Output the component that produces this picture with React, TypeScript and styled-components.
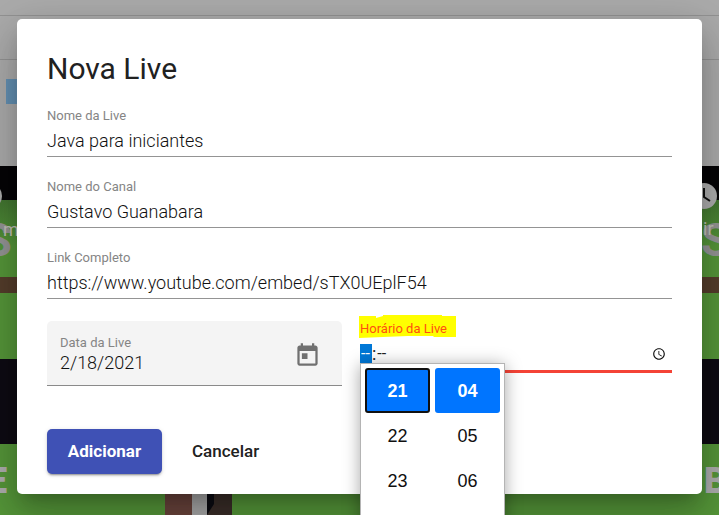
import React from "react";
import styled, { createGlobalStyle } from "styled-components";

const GlobalStyle = createGlobalStyle`
  *, *::before, *::after { box-sizing: border-box; }
  html, body { margin: 0; }
  body {
    font-family: Roboto, "Liberation Sans", sans-serif;
    color: #212121;
    background: #a1a1a1;
  }
  input, button { font: inherit; color: inherit; letter-spacing: inherit; }
`;

const Page = styled.div`
  position: relative;
  height: 100vh;
  overflow: hidden;
`;

const Backdrop = styled.div`
  display: flex;
  flex-direction: column;
  height: 100%;
  background: #ababab;
`;

const Bar = styled.div<{ $height: number }>`
  flex: none;
  height: ${(p) => p.$height}px;
  border-bottom: 1px solid #929292;
`;

const Tools = styled.div`
  flex: none;
  height: 106px;
  padding: 19px 6px;
`;

const Marker = styled.div`
  width: 120px;
  height: 25px;
  background: #6490b3;
`;

const Cards = styled.div`
  flex: 1;
  display: flex;
  gap: 15px;
  background: #a8a8a8;
`;

const Thumbnail = styled.svg<{ $basis?: number }>`
  flex: ${(p) => (p.$basis ? `0 0 ${p.$basis}px` : "1 1 0")};
  min-width: 0;
  height: 100%;
  background: #559639;
  font-family: Roboto, "Liberation Sans", sans-serif;
`;

const Overlay = styled.div`
  position: absolute;
  inset: 0;
  padding: 19px 17px;
`;

const Dialog = styled.form`
  padding: 30px 30px 20px;
  border-radius: 5px;
  background: #fff;
  box-shadow: 0 11px 15px -7px rgba(0, 0, 0, 0.2),
    0 24px 38px 3px rgba(0, 0, 0, 0.14), 0 9px 46px 8px rgba(0, 0, 0, 0.12);
`;

const Title = styled.h1`
  margin: 0 0 19px;
  font-size: 30px;
  line-height: 40px;
  font-weight: 400;
`;

const Field = styled.div`
  display: flex;
  flex-direction: column;
  gap: 5px;
  height: 49px;
  margin-bottom: 22px;
  border-bottom: 1px solid #949494;
`;

const Label = styled.label`
  font-size: 13px;
  line-height: 16px;
  color: #858585;
`;

const TextInput = styled.input`
  width: 100%;
  height: 24px;
  padding: 0;
  border: 0;
  outline: 0;
  background: transparent;
  font-size: 18px;
  font-weight: 350;
  line-height: 24px;
  color: #111;
`;

const Schedule = styled.div`
  display: grid;
  grid-template-columns: minmax(0, 295fr) minmax(0, 312fr);
  gap: 18px;
  align-items: start;
  margin-bottom: 43px;
`;

const DateField = styled.div`
  display: flex;
  align-items: center;
  height: 65px;
  padding: 4px 20px 0 13px;
  border-bottom: 1px solid #8a8a8a;
  border-radius: 5px 5px 0 0;
  background: #f4f4f4;
`;

const DateText = styled.div`
  display: flex;
  flex-direction: column;
  flex: 1;
  min-width: 0;
  height: 50px;
  padding-top: 5px;
`;

const IconButton = styled.button`
  display: grid;
  place-items: center;
  width: 30px;
  height: 30px;
  padding: 0;
  border: 0;
  background: transparent;
  color: #707070;
`;

const TimeField = styled.div`
  position: relative;
  display: flex;
  flex-direction: column;
  gap: 7px;
  height: 52px;
  border-bottom: 3px solid #f44336;
`;

const Highlight = styled.svg`
  position: absolute;
  left: -1px;
  top: -6px;
`;

const TimeLabel = styled(Label)`
  position: relative;
  color: #ff4e10;
`;

const TimeRow = styled.div`
  display: flex;
  align-items: center;
  height: 19px;
  font-size: 18px;
  line-height: 19px;
`;

const Segment = styled.input<{ $selected?: boolean }>`
  width: 12px;
  height: 19px;
  padding: 0 1px;
  border: 0;
  outline: 0;
  font-size: 16px;
  color: ${(p) => (p.$selected ? "#fff" : "#212121")};
  background: ${(p) => (p.$selected ? "#0078d7" : "transparent")};
`;

const ClockButton = styled(IconButton)`
  width: 14px;
  height: 19px;
  margin: 0 6px 0 auto;
  color: #111;
`;

const Picker = styled.div`
  position: absolute;
  top: 42px;
  left: 0;
  display: grid;
  grid-template-columns: 65px 65px;
  gap: 0 5px;
  align-content: start;
  height: 330px;
  padding: 4px;
  border: 1px solid #b4b4b4;
  background: #fff;
  box-shadow: 0 2px 16px rgba(0, 0, 0, 0.35);
  font-family: "Liberation Sans", Arial, sans-serif;
  font-size: 18px;
`;

const Option = styled.button<{ $selected?: boolean; $focused?: boolean }>`
  height: 45px;
  padding: 2px 0 0;
  border: ${(p) => (p.$focused ? "2px solid #101010" : "0")};
  border-radius: 3px;
  background: ${(p) => (p.$selected ? "#0075ff" : "transparent")};
  color: ${(p) => (p.$selected ? "#fff" : "#101010")};
  font-weight: ${(p) => (p.$selected ? 700 : 400)};
`;

const Actions = styled.div`
  display: flex;
  gap: 10px;
`;

const Button = styled.button<{ $primary?: boolean }>`
  min-width: 115px;
  height: 45px;
  padding: 0 20px 1px;
  border: 0;
  border-radius: 5px;
  font-size: 17px;
  text-align: ${(p) => (p.$primary ? "center" : "left")};
  font-weight: ${(p) => (p.$primary ? 700 : 500)};
  color: ${(p) => (p.$primary ? "#fff" : "#212121")};
  background: ${(p) => (p.$primary ? "#3f51b5" : "transparent")};
  box-shadow: ${(p) =>
    p.$primary
      ? "0 3px 1px -2px rgba(0,0,0,.2), 0 2px 2px rgba(0,0,0,.14), 0 1px 5px rgba(0,0,0,.12)"
      : "none"};
`;

const fields = [
  { id: "name", label: "Nome da Live", value: "Java para iniciantes" },
  { id: "channel", label: "Nome do Canal", value: "Gustavo Guanabara" },
  {
    id: "link",
    label: "Link Completo",
    value: "https://www.youtube.com/embed/sTX0UEplF54",
  },
];

const times = [
  ["21", "04"],
  ["22", "05"],
  ["23", "06"],
];

function Stripes() {
  return (
    <>
      <defs>
        <linearGradient id="shade" x1="0" y1="0" x2="0" y2="1">
          <stop offset="0" stopColor="#427530" />
          <stop offset="1" stopColor="#559639" />
        </linearGradient>
      </defs>
      <rect width="100%" height="34" fill="#060507" />
      <rect y="34" width="100%" height="46" fill="url(#shade)" />
      <rect y="111" width="100%" height="16" fill="#543d2b" />
      <rect y="193" width="100%" height="85" fill="#0e0b13" />
    </>
  );
}

export default function App() {
  return (
    <Page>
      <GlobalStyle />
      <Backdrop aria-hidden="true">
        <Bar $height={16} />
        <Bar $height={44} />
        <Tools>
          <Marker />
        </Tools>
        <Cards>
          <Thumbnail $basis={192}>
            <Stripes />
            <rect x="165" y="278" width="27" height="100%" fill="#6a443c" />
            <circle cx="-11" cy="30" r="13" fill="#adadad" />
            <text x="-17" y="90" fontSize="47" fontWeight="700" fill="#949494">S</text>
            <text x="3" y="70" fontSize="18" fill="#c0c0b6">m</text>
            <text x="-13" y="327" fontSize="36" fontWeight="900" fill="#adadad">E</text>
          </Thumbnail>
          <Thumbnail>
            <Stripes />
            <rect y="278" width="25" height="100%" fill="#3a2e29" />
            <path d="M0 278h7v60l-7 11z" fill="#0c0c12" />
            <svg x="100%" overflow="visible">
              <circle cx="-15" cy="30" r="13" fill="#adadad" />
              <path d="M-15 22v9l6 4" fill="none" stroke="#111" strokeWidth="2" />
              <text x="-18" y="90" fontSize="47" fontWeight="700" fill="#949494">S</text>
              <text x="-16" y="69" fontSize="18" fill="#c0c0b6">ir</text>
              <text x="-15" y="327" fontSize="36" fontWeight="900" fill="#adadad">B</text>
            </svg>
          </Thumbnail>
        </Cards>
      </Backdrop>
      <Overlay>
        <Dialog role="dialog" aria-labelledby="title" onSubmit={(e) => e.preventDefault()}>
          <Title id="title">Nova Live</Title>
          {fields.map((f) => (
            <Field key={f.id}>
              <Label htmlFor={f.id}>{f.label}</Label>
              <TextInput id={f.id} defaultValue={f.value} spellCheck={false} />
            </Field>
          ))}
          <Schedule>
            <DateField>
              <DateText>
                <Label htmlFor="date">Data da Live</Label>
                <TextInput id="date" defaultValue="2/18/2021" />
              </DateText>
              <IconButton type="button" aria-label="Abrir calendário">
                <svg width="27" height="27" viewBox="0 0 24 24" fill="currentColor">
                  <path d="M19 3h-1V1h-2v2H8V1H6v2H5c-1.11 0-1.99.9-1.99 2L3 19c0 1.1.89 2 2 2h14c1.1 0 2-.9 2-2V5c0-1.1-.9-2-2-2zm0 16H5V8h14v11zM7 10h5v5H7z" />
                </svg>
              </IconButton>
            </DateField>
            <TimeField>
              <Highlight width="97" height="23" viewBox="359 315 97 23" fill="#ffff00">
                <path d="M359 316h17v2l7-2v-1h59v1h14v21h-22l-1-1h-25l-25 1-24 1z" />
              </Highlight>
              <TimeLabel htmlFor="hour">Horário da Live</TimeLabel>
              <TimeRow>
                <Segment id="hour" $selected defaultValue="--" />
                <span>:</span>
                <Segment aria-label="Minutos" defaultValue="--" />
                <ClockButton type="button" aria-label="Escolher horário">
                  <svg width="14" height="14" viewBox="0 0 24 24" fill="currentColor">
                    <path d="M11.99 2C6.47 2 2 6.48 2 12s4.47 10 9.99 10C17.52 22 22 17.52 22 12S17.52 2 11.99 2zM12 20c-4.42 0-8-3.58-8-8s3.58-8 8-8 8 3.58 8 8-3.58 8-8 8zm.5-13H11v6l5.25 3.15.75-1.23-4.5-2.67z" />
                  </svg>
                </ClockButton>
              </TimeRow>
              <Picker>
                {times.map(([hour, minute], i) => (
                  <React.Fragment key={hour}>
                    <Option type="button" $selected={i === 0} $focused={i === 0}>{hour}</Option>
                    <Option type="button" $selected={i === 0}>{minute}</Option>
                  </React.Fragment>
                ))}
              </Picker>
            </TimeField>
          </Schedule>
          <Actions>
            <Button type="submit" $primary>Adicionar</Button>
            <Button type="button">Cancelar</Button>
          </Actions>
        </Dialog>
      </Overlay>
    </Page>
  );
}
